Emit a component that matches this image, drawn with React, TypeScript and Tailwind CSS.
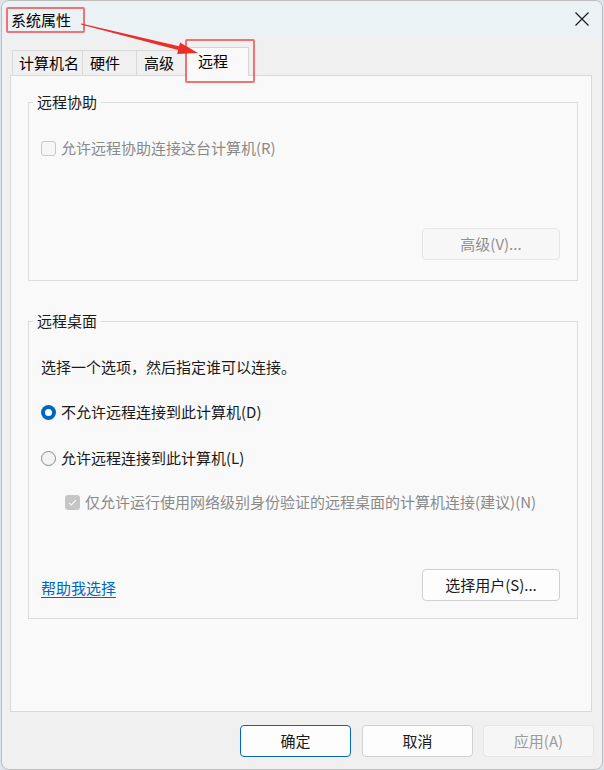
import React from "react";

const font = { fontFamily: '"Noto Sans CJK SC", "Noto Sans", sans-serif' };

function CloseIcon() {
  return (
    <svg width="16" height="16" viewBox="0 0 16 16" fill="none">
      <path d="M1.5 1.5 L14.5 14.5 M14.5 1.5 L1.5 14.5" stroke="#1a1a1a" strokeWidth="1.2" />
    </svg>
  );
}

function GroupBox({ label, className, children }: { label: string; className: string; children: React.ReactNode }) {
  return (
    <div className={"relative border border-[#dcdcdc] flex flex-col " + className}>
      <span className="absolute -top-[11px] left-[4px] px-[4px] bg-[#f9f9f9] leading-[20px] text-[#1a1a1a]">{label}</span>
      {children}
    </div>
  );
}

export default function App() {
  return (
    <div className="w-[604px] h-[770px] bg-[#dde3ec] flex overflow-hidden text-[15px]" style={font}>
      <div className="relative ml-[1px] w-[602px] h-[770px] bg-[#f0f0f0] border border-[#bdbdbd] rounded-[8px] overflow-hidden flex flex-col">
        {/* Title bar */}
        <div className="h-[36px] bg-[#eaf2f6] flex items-center justify-between pl-[9px] pr-[12px] shrink-0">
          <span className="leading-[20px] text-black mt-[1px]">系统属性</span>
          <CloseIcon />
        </div>

        {/* Tabs */}
        <div className="flex items-end pl-[10px] mt-[10px] h-[28px] shrink-0 relative z-10">
          <div className="w-[71px] h-[25px] border border-b-0 border-[#dadada] bg-[#f0f0f0] pl-[6px] leading-[24px] text-black">计算机名</div>
          <div className="w-[54px] h-[25px] border border-b-0 border-l-0 border-[#dadada] bg-[#f0f0f0] pl-[7px] leading-[24px] text-black">硬件</div>
          <div className="w-[50px] h-[25px] border border-b-0 border-l-0 border-[#dadada] bg-[#f0f0f0] pl-[7px] leading-[24px] text-black">高级</div>
          <div className="w-[64px] h-[29px] -ml-[2px] -mb-px border border-b-0 border-[#d6d6d6] bg-[#f9f9f9] pl-[12px] leading-[26px] text-black">远程</div>
        </div>

        {/* Tab panel */}
        <div className="ml-[8px] w-[582px] h-[637px] border border-[#d9d9d9] bg-[#f9f9f9] shrink-0 flex flex-col">
          <GroupBox label="远程协助" className="ml-[17px] mt-[26px] w-[550px] h-[179px] pl-[12px]">
            <div className="flex items-center mt-[35px] h-[20px]">
              <span className="w-[15px] h-[15px] rounded-[3px] border border-[#c9c9c9] bg-[#f6f6f6]" />
              <span className="ml-[5px] leading-[20px] text-[#8a8a8a]">允许远程协助连接这台计算机(R)</span>
            </div>
            <div className="mt-auto mb-[20px] mr-[17px] self-end w-[138px] h-[32px] rounded-[4px] border border-[#e6e6e6] bg-[#f7f7f7] flex items-center justify-center text-[#8f8f8f]">
              高级(V)...
            </div>
          </GroupBox>

          <GroupBox label="远程桌面" className="ml-[17px] mt-[40px] w-[550px] h-[298px] pl-[12px]">
            <div className="mt-[35px] h-[20px] leading-[20px] text-[#1a1a1a]">选择一个选项，然后指定谁可以连接。</div>
            <div className="flex items-center mt-[25px] h-[20px]">
              <span className="w-[15px] h-[15px] rounded-full bg-[#0067c0] flex items-center justify-center">
                <span className="w-[7px] h-[7px] rounded-full bg-white" />
              </span>
              <span className="ml-[5px] leading-[20px] text-[#1a1a1a]">不允许远程连接到此计算机(D)</span>
            </div>
            <div className="flex items-center mt-[26px] h-[20px]">
              <span className="w-[15px] h-[15px] rounded-full border border-[#8a8a8a] bg-[#f3f3f3]" />
              <span className="ml-[5px] leading-[20px] text-[#1a1a1a]">允许远程连接到此计算机(L)</span>
            </div>
            <div className="flex items-center mt-[24px] h-[20px] pl-[24px]">
              <span className="w-[15px] h-[15px] rounded-[3px] bg-[#c5c5c5] flex items-center justify-center">
                <svg width="9" height="9" viewBox="0 0 9 9" fill="none">
                  <path d="M1.2 4.8 L3.4 7 L7.8 2.2" stroke="#ffffff" strokeWidth="1.1" />
                </svg>
              </span>
              <span className="ml-[5px] leading-[20px] text-[#8a8a8a]">仅允许运行使用网络级别身份验证的远程桌面的计算机连接(建议)(N)</span>
            </div>
            <div className="mt-auto mb-[17px] mr-[17px] flex items-end justify-between">
              <span className="mb-[3px] leading-[20px] text-[#0067c0] underline underline-offset-[3px]">帮助我选择</span>
              <div className="w-[138px] h-[32px] rounded-[4px] border border-[#d0d0d0] bg-[#fdfdfd] flex items-center justify-center text-[#1a1a1a]">
                选择用户(S)...
              </div>
            </div>
          </GroupBox>
        </div>

        {/* Bottom buttons */}
        <div className="mt-[13px] flex justify-end pr-[8px] shrink-0">
          <div className="w-[111px] h-[32px] rounded-[4px] border border-[#0067c0] bg-[#fdfdfd] flex items-center justify-center text-[#1a1a1a]">确定</div>
          <div className="ml-[11px] w-[111px] h-[32px] rounded-[4px] border border-[#d0d0d0] bg-[#fdfdfd] flex items-center justify-center text-[#1a1a1a]">取消</div>
          <div className="ml-[10px] w-[111px] h-[32px] rounded-[4px] border border-[#e6e6e6] bg-[#f6f6f6] flex items-center justify-center text-[#9b9b9b]">应用(A)</div>
        </div>

        {/* Annotations */}
        <div className="absolute left-[4px] top-[6px] w-[79px] h-[26px] border-2 border-[#f07272] rounded-[2px]" />
        <div className="absolute left-[183px] top-[38px] w-[70px] h-[44px] border-2 border-[#f07272] rounded-[2px] z-20" />
        <svg className="absolute left-0 top-0 z-20" width="220" height="70" viewBox="0 0 220 70">
          <polygon
            points="79.1,22.5 177.1,45.3 178,41.4 196,52 175.2,53 176.1,49.1 78.9,23.5"
            fill="#e8302a"
          />
        </svg>
      </div>
    </div>
  );
}
